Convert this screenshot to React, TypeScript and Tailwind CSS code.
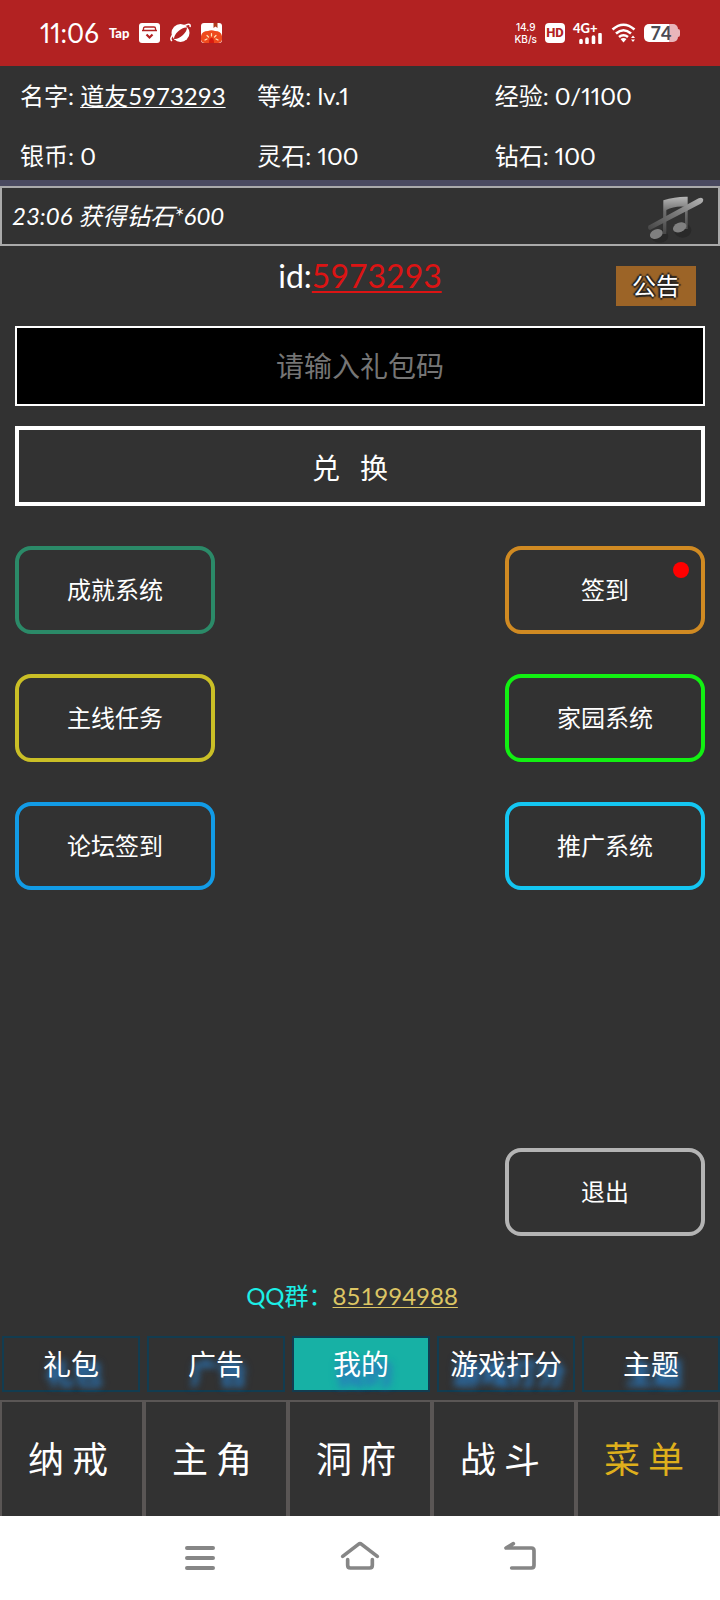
import React from 'react';

interface MenuButtonProps {
  label: string;
  border: string;
  badge?: boolean;
}

const stats = [
  { label: '等级', value: 'lv.1' },
  { label: '经验', value: '0/1100' },
  { label: '银币', value: '0' },
  { label: '灵石', value: '100' },
  { label: '钻石', value: '100' },
];

const leftMenu: MenuButtonProps[] = [
  { label: '成就系统', border: 'border-[#2b8a68]' },
  { label: '主线任务', border: 'border-[#cabf26]' },
  { label: '论坛签到', border: 'border-[#129be6]' },
];

const rightMenu: MenuButtonProps[] = [
  { label: '签到', border: 'border-[#d08a22]', badge: true },
  { label: '家园系统', border: 'border-[#12f012]' },
  { label: '推广系统', border: 'border-[#14c6f2]' },
];

const subTabs = ['礼包', '广告', '我的', '游戏打分', '主题'];
const mainTabs = ['纳戒', '主角', '洞府', '战斗', '菜单'];

const MenuButton: React.FC<MenuButtonProps> = ({ label, border, badge }) => (
  <button className={`relative h-[88px] w-[200px] rounded-2xl border-4 text-2xl ${border}`}>
    {label}
    {badge && <span className="absolute top-3 right-3 h-4 w-4 rounded-full bg-[#ff0000]" />}
  </button>
);

const StatusBar: React.FC = () => (
  <header className="flex h-[66px] items-center justify-between bg-[#b22222] px-10">
    <div className="flex items-center gap-[10px]">
      <span className="text-[26px] leading-7 proportional-nums">11:06</span>
      <span className="text-[13px] leading-4 font-black">Tap</span>
      <svg className="h-5 w-[21px]" viewBox="0 0 21 20">
        <rect width="21" height="20" rx="3" fill="#fff" />
        <path d="M4.500 7.500V5.500Q4.500 4 6 4H15Q16.500 4 16.500 5.500V7.500M3 7.500H18" fill="none" stroke="#b22222" strokeWidth="1.300" />
        <path d="M7.500 11.500L10.500 14.500L13.500 11.500" fill="none" stroke="#b22222" strokeWidth="2.200" />
      </svg>
      <svg className="h-5 w-[21px]" viewBox="0 0 21 20">
        <circle cx="10.500" cy="10" r="9" fill="#fff" />
        <path d="M2 18Q-1 16 4 10Q10 3 16 2Q21 0 20 4" fill="none" stroke="#fff" strokeWidth="1.500" />
        <path d="M4 16Q4 12 8 8.500Q13 4 17 4.500Q17 8 13 12Q8 16.500 4 16Z" fill="#b22222" />
      </svg>
      <svg className="h-5 w-[21px]" viewBox="0 0 21 20">
        <rect width="21" height="20" rx="3" fill="#fff" />
        <path d="M12.500 0H16.500V5L14.500 3.500L12.500 5Z" fill="#b03a1c" />
        <path d="M0 13Q1 8 7 8Q10.500 6.500 14 8Q20 8 21 13V17Q20 20 17 20H4Q1 20 0 17Z" fill="#ef4a1d" />
        <path d="M8 20Q8 15 10.500 15Q13 15 13 20Z" fill="#d81a10" />
        <path d="M4 17L6 16M6 12.500L7.500 14M10.500 10.500V13M15 12.500L13.500 14M17 17L15 16" stroke="#ffe3b8" strokeWidth="1.200" strokeLinecap="round" />
      </svg>
    </div>
    <div className="flex items-center gap-2">
      <div className="text-center font-[Inter,sans-serif] text-[10px] leading-3 font-medium">
        <div>14.9</div>
        <div>KB/s</div>
      </div>
      <span className="flex h-5 w-5 items-center justify-center rounded bg-white font-[Roboto,sans-serif] text-[13px] leading-5 font-extrabold text-[#b22222]">HD</span>
      <div className="flex w-[30px] flex-col">
        <span className="text-[13px] leading-[10px] font-black">4G+</span>
        <svg className="h-[11px] w-[30px]" viewBox="0 0 30 11">
          <path d="M8 7.500V9.500M14 6V9.500M20.500 4V9.500M27 1.500V9.500" stroke="#fff" strokeWidth="3.600" strokeLinecap="round" />
        </svg>
      </div>
      <svg className="h-5 w-[25px]" viewBox="0 0 25 20">
        <path d="M1.500 6.500Q12.500 -3 23.500 6.500M5 10.500Q12.500 4 20 10.500M8 14Q12.500 10.500 17 14" fill="none" stroke="#fff" strokeWidth="2.600" />
        <path d="M9.500 16Q12.500 14 15.500 16L12.500 19.500Z" fill="#fff" />
        <path d="M20 15L22 12.500L24 15ZM20 16.500H24L22 19Z" fill="#fff" />
      </svg>
      <div className="flex items-center">
        <span className="flex h-[18px] w-[34px] items-center justify-center rounded-[5px] bg-linear-to-r from-white from-74% to-[#e9b5ba] to-74% text-lg leading-4 font-bold text-[#4b4b52]">
          74
        </span>
        <span className="h-2 w-0.5 rounded-r bg-[#e9b5ba]" />
      </div>
    </div>
  </header>
);

const MutedMusicIcon: React.FC = () => (
  <svg className="h-[50px] w-[60px]" viewBox="860 405 180 150">
    <defs>
      <linearGradient id="note" x1="0" y1="0" x2="0" y2="1">
        <stop offset="0" stopColor="#b8b8b8" />
        <stop offset="0.4" stopColor="#6e6e6e" />
        <stop offset="1" stopColor="#484848" />
      </linearGradient>
      <linearGradient id="slash" x1="1" y1="0" x2="0" y2="1">
        <stop offset="0" stopColor="#b4b4b4" />
        <stop offset="0.5" stopColor="#787878" />
        <stop offset="1" stopColor="#464646" />
      </linearGradient>
    </defs>
    <ellipse cx="901" cy="531" rx="26" ry="20" fill="#1f1f1f" opacity="0.5" />
    <ellipse cx="970" cy="514" rx="26" ry="22" fill="#1f1f1f" opacity="0.5" />
    <path d="M912 424Q948 412 985 413V510H977V443Q945 440 921 453V525H911Z" fill="url(#note)" />
    <ellipse cx="891" cy="525" rx="20" ry="14" transform="rotate(-22 891 525)" fill="#808080" />
    <ellipse cx="961" cy="505" rx="21" ry="14" transform="rotate(-22 961 505)" fill="#808080" />
    <path d="M867 500L1018 418Q1029 413 1032 422Q1032 430 1024 434L872 513Q864 511 867 500Z" fill="url(#slash)" />
  </svg>
);

const SystemNav: React.FC = () => (
  <nav className="flex h-[84px] items-center justify-center gap-[120px] bg-white">
    <button aria-label="最近任务">
      <svg className="h-10 w-10" viewBox="540 654 120 120" fill="none" stroke="#868686" strokeWidth="12" strokeLinecap="round">
        <path d="M561 684H639M561 714H639M561 744H639" />
      </svg>
    </button>
    <button aria-label="主页">
      <svg className="h-10 w-10" viewBox="-60 654 120 120" fill="none" stroke="#868686" strokeWidth="11" strokeLinecap="round" strokeLinejoin="round">
        <path d="M-52 709L-5 673Q0 669 5 673L52 709" />
        <path d="M-37 719V736Q-37 744 -29 744H29Q37 744 37 736V719" />
      </svg>
    </button>
    <button aria-label="返回">
      <svg className="h-10 w-10" viewBox="420 654 120 120" fill="none" stroke="#868686" strokeWidth="11" strokeLinecap="round" strokeLinejoin="round">
        <path d="M460 671L438 684H514Q522 684 522 692V736Q522 744 514 744H455" />
      </svg>
    </button>
  </nav>
);

const App: React.FC = () => {
  return (
    <div className="flex min-h-screen flex-col bg-[#323232] font-[Lato,'Noto_Sans_CJK_SC',sans-serif] text-white">
      <StatusBar />

      <section className="grid grid-cols-3 gap-x-3 gap-y-8 border-b-6 border-[#4a4a60] pt-4 pb-2.5 pl-5 text-2xl leading-7">
        <div className="whitespace-nowrap">
          名字: <span className="underline decoration-1 underline-offset-2">道友5973293</span>
        </div>
        {stats.map((stat, i) => (
          <div key={i} className="proportional-nums">{stat.label}: {stat.value}</div>
        ))}
      </section>

      <div className="flex h-[60px] items-end justify-between border-2 border-[#aaaaaa] pr-3 pl-2.5 text-2xl">
        <span className="self-center italic">23:06 获得钻石*600</span>
        <button aria-label="音乐"><MutedMusicIcon /></button>
      </div>

      <main className="flex flex-1 flex-col px-[15px]">
        <div className="grid grid-cols-[1fr_auto_1fr] items-start px-[9px] pt-3">
          <p className="col-start-2 text-[32px] leading-9">
            id:<a href="#id" className="text-[#dc1414] underline decoration-2 underline-offset-3">5973293</a>
          </p>
          <button className="mt-2 h-10 w-20 justify-self-end bg-[#9c6427] text-2xl leading-10 [text-shadow:2px_0_1px_#222,-2px_0_1px_#222,0_2px_1px_#222,0_-2px_1px_#222]">
            公告
          </button>
        </div>

        <input
          type="text"
          aria-label="礼包码"
          placeholder="请输入礼包码"
          className="mt-5 h-20 w-full border-2 border-white bg-black text-center text-[28px] placeholder:text-[#757575]"
        />
        <button className="mt-5 flex h-20 w-full items-center justify-center gap-5 border-4 border-white pt-1 pr-5 text-[28px]">
          <span>兑</span>
          <span>换</span>
        </button>

        <div className="mt-10 flex justify-between">
          <div className="flex flex-col gap-10">
            {leftMenu.map(item => <MenuButton key={item.label} {...item} />)}
          </div>
          <div className="flex flex-col gap-10">
            {rightMenu.map(item => <MenuButton key={item.label} {...item} />)}
          </div>
        </div>

        <div className="mt-auto flex justify-end">
          <MenuButton label="退出" border="border-[#b4b4b4]" />
        </div>

        <p className="mt-11 mb-6 pr-4 text-center text-2xl leading-8 text-[#1ceee6]">
          QQ群：<a href="#qq" className="text-[#dcc564] underline decoration-1 underline-offset-2">851994988</a>
        </p>
      </main>

      <div className="grid grid-cols-5 gap-[7px] pl-0.5">
        {subTabs.map(tab => (
          <button
            key={tab}
            className={`h-14 border-2 border-[#123c50] text-[28px] leading-[52px] whitespace-nowrap [text-shadow:3px_9px_6px_#2b78bc,3px_9px_8px_#2b78bc] ${tab === '我的' ? 'bg-[#17b1a5]' : ''}`}
          >
            {tab}
          </button>
        ))}
      </div>

      <nav className="mt-2 grid grid-cols-5">
        {mainTabs.map(tab => (
          <button
            key={tab}
            className={`flex h-[116px] items-center justify-center gap-2 border-2 border-b-0 border-[#5a5655] pr-2 text-4xl ${tab === '菜单' ? 'text-[#deaf1c]' : ''}`}
          >
            {tab.split('').map(char => <span key={char}>{char}</span>)}
          </button>
        ))}
      </nav>

      <SystemNav />
    </div>
  );
};

export default App;
